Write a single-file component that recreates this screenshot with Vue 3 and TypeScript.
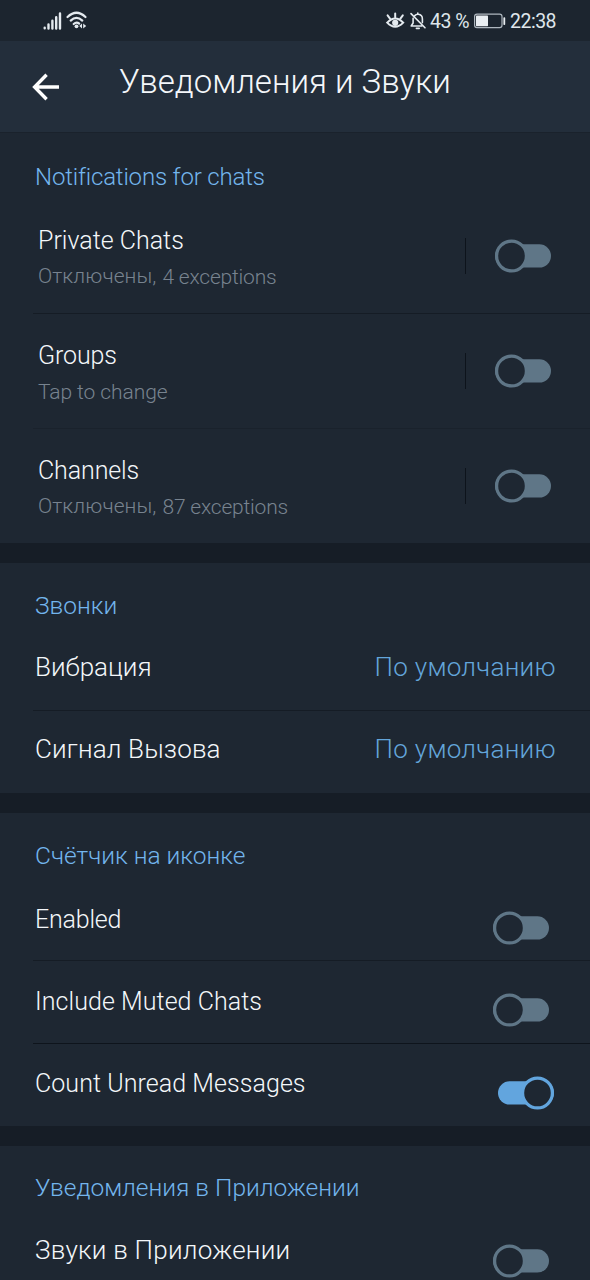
<script setup lang="ts">
interface Row {
  id: string
  title: string
  lead?: string
  note?: string
  value?: string
  on?: boolean
}
interface Section {
  id: string
  title: string
  kind: 'detail' | 'value' | 'check'
  rows: Row[]
}

const sections: Section[] = [
  {
    id: 'chats', title: 'Notifications for chats', kind: 'detail',
    rows: [
      { id: 'private', title: 'Private Chats', lead: 'Отключены,', note: '4 exceptions', on: false },
      { id: 'groups', title: 'Groups', note: 'Tap to change', on: false },
      { id: 'channels', title: 'Channels', lead: 'Отключены,', note: '87 exceptions', on: false },
    ],
  },
  {
    id: 'calls', title: 'Звонки', kind: 'value',
    rows: [
      { id: 'vibrate', title: 'Вибрация', value: 'По умолчанию' },
      { id: 'ringtone', title: 'Сигнал Вызова', value: 'По умолчанию' },
    ],
  },
  {
    id: 'badge', title: 'Счётчик на иконке', kind: 'check',
    rows: [
      { id: 'enabled', title: 'Enabled', on: false },
      { id: 'muted', title: 'Include Muted Chats', on: false },
      { id: 'unread', title: 'Count Unread Messages', on: true },
    ],
  },
  {
    id: 'inapp', title: 'Уведомления в Приложении', kind: 'check',
    rows: [{ id: 'sounds', title: 'Звуки в Приложении', on: false }],
  },
]
</script>

<template>
  <div class="screen">
    <div class="status">
      <svg class="signal" width="18" height="18" viewBox="0 0 18 18">
        <path d="M1.7 15.8V16.2M5.5 12.5V16.5M9.4 8.8V16.5M13.2 5.3V16.5M17 1.5V16.5" />
      </svg>
      <svg class="wifi" width="22" height="18" viewBox="0 0 22 18">
        <path class="arc" d="M1.5 6Q10.5 -2.5 19.5 6M4.7 9.6Q10.5 4 16.3 9.6M7.7 13Q10.5 10.3 13.2 12.6" />
        <circle cx="10.5" cy="15.3" r="1.9" />
        <path d="M16 12.6V17.4L13.3 15ZM17.2 12.6V17.4L20.2 15Z" />
      </svg>
      <span class="grow"></span>
      <svg class="eye" width="20" height="18" viewBox="0 0 20 18">
        <path d="M1.2 10.6Q9.2 2.4 17.2 10.6Q9.2 18.8 1.2 10.6Z" />
        <path d="M9.2 1.6V5.2M1.6 3.4L4 6.6M16.8 3.4L14.4 6.6" />
        <circle cx="9.2" cy="10.8" r="3.1" />
      </svg>
      <svg class="bell" width="16" height="18" viewBox="0 0 16 18">
        <path d="M4.8 3.6C5.6 2.8 6.4 2.4 7.8 2.3V1.1M8.4 2.3C11 2.6 12.4 4.6 12.4 7V10.6M3.1 6.2V11L1.2 14H11.8M1 1.6L15 15.8M6.4 16.4H9.2" />
      </svg>
      <span class="percent">43 %</span>
      <svg class="battery" width="32" height="16" viewBox="0 0 32 16">
        <rect class="case" x="0.6" y="1.1" width="27.4" height="13.6" rx="2.4" />
        <rect x="2" y="2.6" width="12" height="10.6" rx="0.6" />
        <rect x="29.4" y="4.2" width="1.8" height="7.8" rx="0.8" />
      </svg>
      <span class="time">22:38</span>
    </div>

    <header class="bar">
      <svg class="back" width="28" height="28" viewBox="0 0 28 28">
        <path d="M27 14H3M14.6 1.8L2.6 14L14.6 26.2" />
      </svg>
      <h1>Уведомления и Звуки</h1>
    </header>

    <main>
      <section v-for="s in sections" :key="s.id" :class="[s.kind, s.id]">
        <h2>{{ s.title }}</h2>
        <div v-for="r in s.rows" :key="r.id" class="row" :class="r.id">
          <div class="label">
            <div class="title">{{ r.title }}</div>
            <div v-if="r.note" class="sub">
              <span v-if="r.lead" class="lead">{{ r.lead }}</span>
              <span class="note">{{ r.note }}</span>
            </div>
          </div>
          <div v-if="r.value" class="choice">{{ r.value }}</div>
          <span v-if="s.kind === 'detail'" class="rule"></span>
          <svg v-if="r.on !== undefined" class="toggle" :class="{ on: r.on }" width="56" height="34" viewBox="0 0 56 34">
            <rect x="0" y="5.2" width="56" height="23.4" rx="11.7" class="track" />
            <circle :cx="r.on ? 39.5 : 16.5" cy="17" r="14.9" class="knob" />
          </svg>
        </div>
      </section>
    </main>
  </div>
</template>

<style>
body { margin: 0; background: #1e2732; overflow: hidden; }
</style>

<style scoped>
.screen {
  width: 590px;
  height: 1280px;
  overflow: hidden;
  background: #161d26;
  color: #f4f7fa;
  font-family: Roboto, "Noto Sans", sans-serif;
  font-weight: 300;
}
.screen * { box-sizing: border-box; }
svg { display: block; flex: none; overflow: visible; }
h1, h2 { margin: 0; font-weight: 300; white-space: nowrap; }

.status {
  height: 41px;
  display: flex;
  align-items: center;
  padding: 0 34px 0 43px;
  background: #1c252f;
  color: #dfe6eb;
  font-size: 19.5px;
  font-weight: 400;
  letter-spacing: -0.5px;
  line-height: 41px;
  white-space: nowrap;
}
.grow { flex: 1; }
.signal { fill: none; stroke: #e4eaef; stroke-width: 2.4; stroke-linecap: round; }
.wifi { fill: #e4eaef; margin-left: 5px; margin-top: -1px; }
.arc { fill: none; stroke: #e4eaef; stroke-width: 2.2; stroke-linecap: round; }
.eye { fill: none; stroke: #e4eaef; stroke-width: 2; stroke-linecap: round; }
.eye circle { fill: #e4eaef; stroke: none; }
.bell { fill: none; stroke: #e4eaef; stroke-width: 1.6; stroke-linecap: round; stroke-linejoin: round; margin-left: 4px; }
.percent { width: 40px; margin-left: 4px; padding-top: 1px; }
.battery { fill: #e9eef2; margin-left: 4px; }
.case { fill: none; stroke: #aeb7bf; stroke-width: 1.2; }
.time { width: 46px; margin-left: 4px; padding-top: 1px; }

.bar {
  height: 92px;
  display: flex;
  align-items: flex-start;
  padding: 32px 0 0 32px;
  background: #232e3b;
  border-bottom: 1px solid #1a222c;
}
.back { fill: none; stroke: #fff; stroke-width: 3.4; }
h1 { margin: -11px 0 0 59px; font-size: 33px; line-height: 40px; }

main { display: flex; flex-direction: column; gap: 20px; }
section { background: #1e2732; flex: none; }
h2 { height: 65px; padding: 27px 0 0 35px; font-size: 24.5px; line-height: 32px; color: #73b5ed; }
.chats h2 { padding-top: 28px; font-size: 24px; letter-spacing: -0.17px; }
.inapp h2 { padding-top: 26px; }

.row { position: relative; height: 82px; display: flex; align-items: flex-start; padding-left: 35px; white-space: nowrap; }
.row + .row { height: 83px; }
.row + .row::before { content: ""; position: absolute; left: 33px; right: 0; top: 0; height: 1px; background: #151c25; }
.row.muted + .unread { height: 82.5px; }
.row.muted + .unread::before { background: #0e141c; }
.label { flex: 1; }
.title { font-size: 26px; line-height: 32px; padding-top: 23px; }
.choice { padding: 23px 34px 0 0; font-size: 26px; line-height: 32px; letter-spacing: 0.3px; color: #63a5da; }
.ringtone .title { letter-spacing: 0.15px; }

.detail .row { height: 115px; padding-left: 38px; }
.detail .groups + .channels::before { background: #1a222c; }
.detail .title { font-size: 25px; padding-top: 27px; }
.detail .groups .title, .detail .channels .title { letter-spacing: -0.12px; }
.sub { display: flex; gap: 6px; margin-top: 5px; font-size: 21px; line-height: 28px; color: #78838f; }
.lead { letter-spacing: 0.08px; }
.note { padding-top: 1px; letter-spacing: -0.2px; }
.groups .note { letter-spacing: -0.08px; }
.rule { width: 1px; height: 36px; margin: 40px 29px 0 0; background: #0d131b; }
.toggle { margin: 41px 39px 0 0; fill: #5f7687; stroke: #5f7687; }
.check .title { font-size: 25px; padding-top: 26px; letter-spacing: 0.06px; }
.check .enabled .title { letter-spacing: -0.2px; }
.check .unread .title { padding-top: 25px; }
.check .toggle { margin: 33px 41px 0 0; }
.check .toggle.on { margin-right: 36px; fill: #62a5de; stroke: #62a5de; }
.inapp .row .title { padding-top: 23px; font-size: 26px; letter-spacing: 0.25px; }
.track { stroke: none; }
.knob { fill: #1e2732; stroke-width: 3.2; }
</style>
